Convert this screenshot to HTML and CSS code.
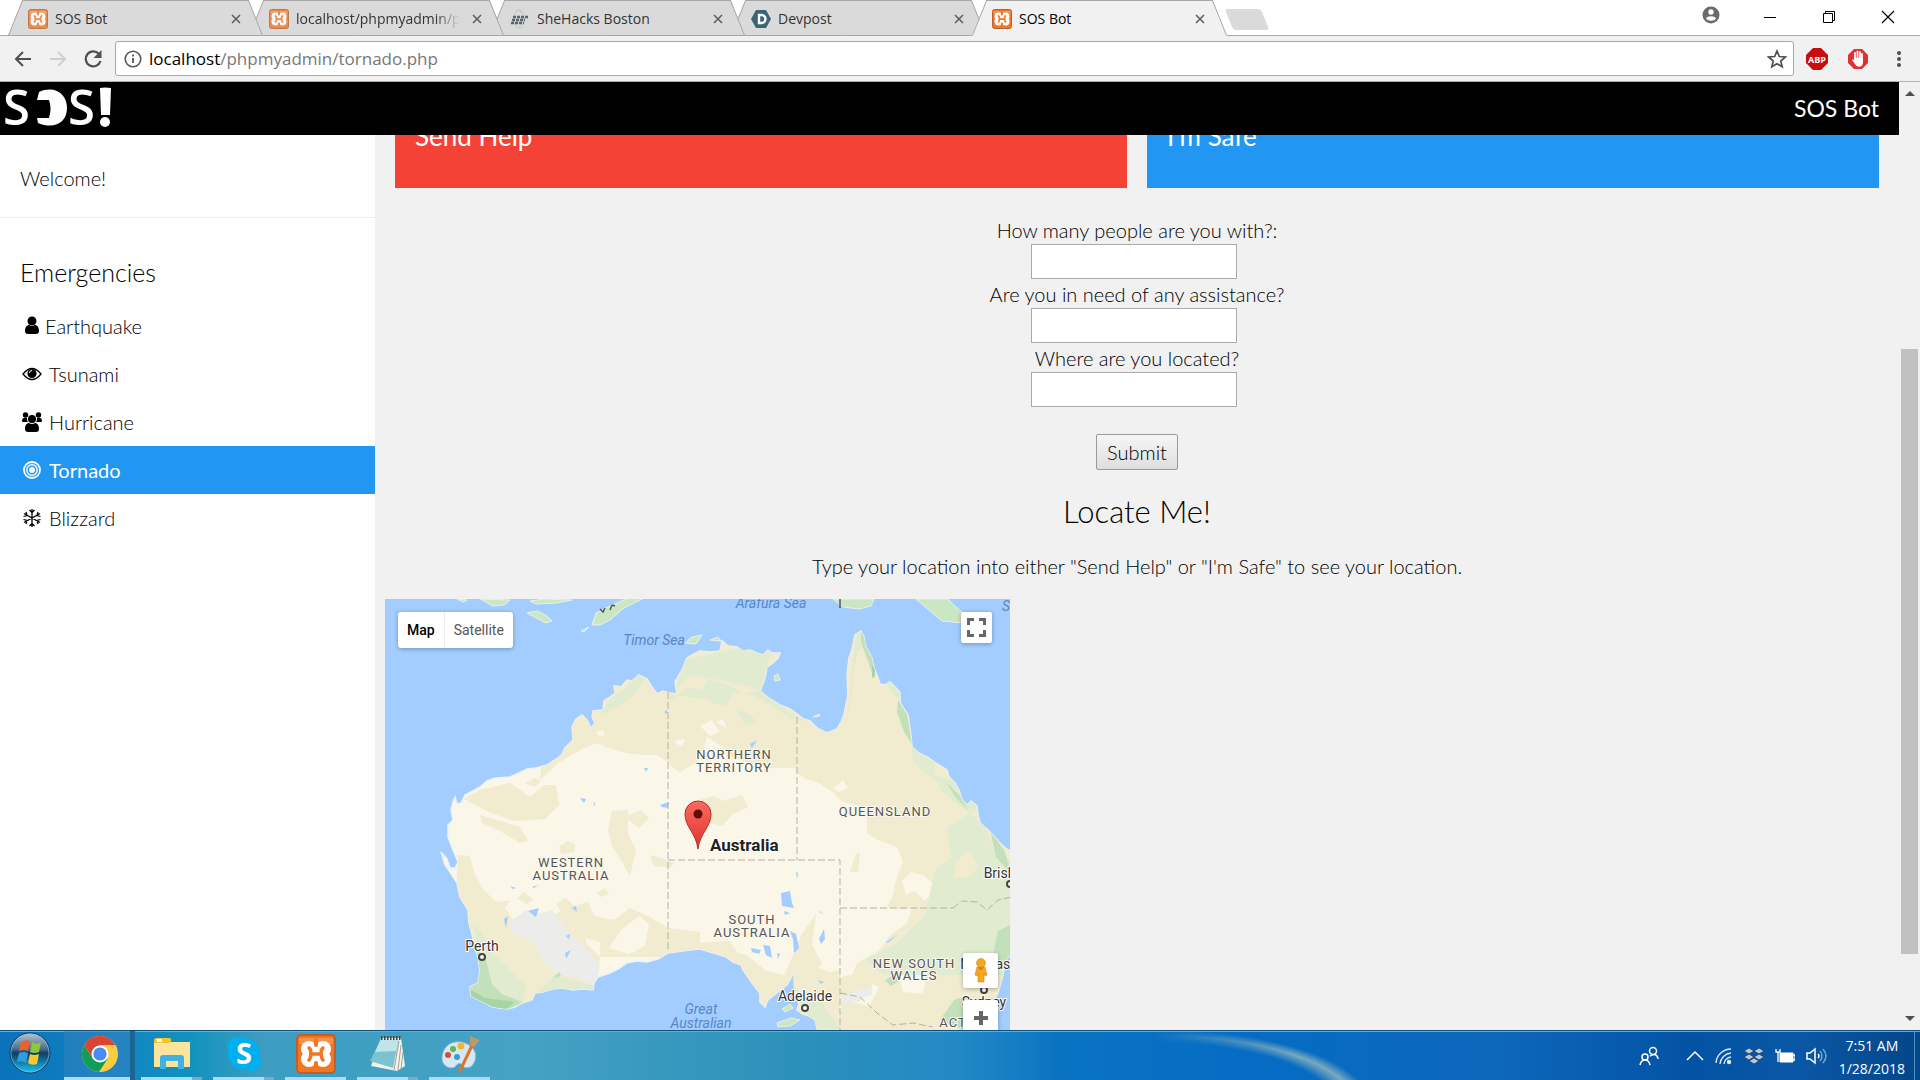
FILE: index.html
```html
<!DOCTYPE html>
<html lang="en">
<head>
    <meta charset="UTF-8">
    <meta name="viewport" content="width=device-width, initial-scale=1.0">
    <title>SOS Bot</title>
    <link rel="stylesheet" href="styles.css">
</head>
<body>
    <!-- shared icons -->
    <svg class="defs" aria-hidden="true">
        <symbol id="xampp" viewBox="0 0 40 40">
            <rect x="1" y="1" width="38" height="38" rx="4" fill="#f37623" stroke="#b9602c" stroke-width="2"/>
            <path d="M3 4h34v6H3z" fill="#f9a36a" opacity=".6"/>
            <g fill="#fff">
                <circle cx="13" cy="15" r="8"/><circle cx="27" cy="15" r="8"/>
                <circle cx="13" cy="25" r="8"/><circle cx="27" cy="25" r="8"/>
                <path d="M11 11h18v18H11z"/>
            </g>
            <path d="M13 14c3 2 2 10 0 12M27 14c-3 2-2 10 0 12M15 20h10" fill="none" stroke="#f37623" stroke-width="3.500" stroke-linecap="round"/>
            <path d="M20 6v5M20 29v5" stroke="#f37623" stroke-width="4" stroke-linecap="round"/>
        </symbol>
        <symbol id="close" viewBox="0 0 10 10">
            <path d="M1 1l8 8M9 1l-8 8" stroke="#5f5f5f" stroke-width="1.6"/>
        </symbol>
    </svg>

    <header class="browser">
        <div class="tabs">
            <div class="tab tab-1">
                <svg class="favicon faded"><use href="#xampp"/></svg>
                <span class="tab-title">SOS Bot</span>
                <button class="tab-close" aria-label="Close tab"><svg><use href="#close"/></svg></button>
            </div>
            <div class="tab tab-2">
                <svg class="favicon faded"><use href="#xampp"/></svg>
                <span class="tab-title fade">localhost/phpmyadmin/php</span>
                <button class="tab-close" aria-label="Close tab"><svg><use href="#close"/></svg></button>
            </div>
            <div class="tab tab-3">
                <svg class="favicon" viewBox="0 0 20 20">
                    <ellipse cx="9" cy="10" rx="5" ry="9" fill="none" stroke="#a8d5c0"/>
                    <path d="M5 4a5 9 0 0 1 7 0" fill="none" stroke="#edb49a"/>
                    <path d="M3 8h15M2 11h13M1 14h13" stroke="#5b646e" stroke-width="2.500" stroke-dasharray="3 1"/>
                </svg>
                <span class="tab-title">SheHacks Boston</span>
                <button class="tab-close" aria-label="Close tab"><svg><use href="#close"/></svg></button>
            </div>
            <div class="tab tab-4">
                <svg class="favicon" viewBox="0 0 20 20">
                    <path d="M5 1h10l5 9-5 9H5l-5-9z" fill="#3b6478"/>
                    <path d="M8 6h2.500a4 4 0 0 1 0 8H8z" fill="none" stroke="#fff" stroke-width="2.400"/>
                </svg>
                <span class="tab-title">Devpost</span>
                <button class="tab-close" aria-label="Close tab"><svg><use href="#close"/></svg></button>
            </div>
            <div class="tab active">
                <svg class="favicon"><use href="#xampp"/></svg>
                <span class="tab-title">SOS Bot</span>
                <button class="tab-close" aria-label="Close tab"><svg><use href="#close"/></svg></button>
            </div>
            <button class="new-tab" aria-label="New tab"></button>
            <div class="window-buttons">
                <button aria-label="Profile">
                    <svg width="18" height="18" viewBox="0 0 18 18"><circle cx="9" cy="9" r="8.500" fill="#6b6b6b"/><circle cx="9" cy="6" r="2.700" fill="#fff"/><path d="M4 12.500c1-3 9-3 10 0-2 3-8 3-10 0z" fill="#fff"/></svg>
                </button>
                <button aria-label="Minimize">
                    <svg width="14" height="14"><path d="M1 7.500h12" stroke="#000"/></svg>
                </button>
                <button aria-label="Restore">
                    <svg width="14" height="14" fill="none" stroke="#000"><path d="M1.500 3.500h9v9h-9zM3.500 3.500v-2h9v9h-2"/></svg>
                </button>
                <button aria-label="Close">
                    <svg width="14" height="14"><path d="M1 1l12 12M13 1L1 13" stroke="#000" stroke-width="1.200"/></svg>
                </button>
            </div>
        </div>
        <div class="toolbar">
            <div class="nav-buttons">
                <button aria-label="Back"><svg width="20" height="20" viewBox="0 0 20 20"><path d="M18 10H3M10 3l-7 7 7 7" fill="none" stroke="#505050" stroke-width="2"/></svg></button>
                <button aria-label="Forward"><svg width="20" height="20" viewBox="0 0 20 20"><path d="M2 10h15M10 3l7 7-7 7" fill="none" stroke="#cfcfcf" stroke-width="2"/></svg></button>
                <button aria-label="Reload"><svg width="20" height="20" viewBox="0 0 20 20"><path d="M16 5a7.500 7.500 0 1 0 1.500 7" fill="none" stroke="#505050" stroke-width="2.200"/><path d="M18.500 1v8h-8z" fill="#505050"/></svg></button>
            </div>
            <div class="address">
                <svg width="18" height="18" viewBox="0 0 18 18"><circle cx="9" cy="9" r="7.800" fill="none" stroke="#555" stroke-width="1.600"/><path d="M9 8v5M9 4.500v2" stroke="#555" stroke-width="1.800"/></svg>
                <span class="url">localhost<span>/phpmyadmin/tornado.php</span></span>
                <button aria-label="Bookmark"><svg width="20" height="20" viewBox="0 0 20 20"><path d="M10 2l2.300 5.500 6 .500-4.500 4 1.400 5.800L10 14.700l-5.200 3.100L6.200 12 1.700 8l6-.500z" fill="none" stroke="#505050" stroke-width="1.700"/></svg></button>
            </div>
            <div class="extensions">
                <button aria-label="Adblock Plus">
                    <svg width="22" height="22" viewBox="0 0 22 22"><path d="M7 0h8l7 7v8l-7 7H7l-7-7V7z" fill="#c70d0d"/><text x="11" y="15" text-anchor="middle" class="abp">ABP</text></svg>
                </button>
                <button aria-label="AdBlock">
                    <svg width="20" height="20" viewBox="0 0 20 20"><path d="M6 0h8l6 6v8l-6 6H6l-6-6V6z" fill="#e03030"/><path d="M7 11V4M9.500 10V2.500M12 10V3M14 12V5" stroke="#fff" stroke-width="1.800" stroke-linecap="round"/><path d="M6 9h9v4c0 6-6 6-8 2l-3-4c1-1 2 0 3 1z" fill="#fff"/></svg>
                </button>
                <button aria-label="Menu">
                    <svg width="6" height="18" fill="#505050"><circle cx="3" cy="3" r="2"/><circle cx="3" cy="9" r="2"/><circle cx="3" cy="15" r="2"/></svg>
                </button>
            </div>
        </div>
    </header>

    <div class="viewport">
        <div class="site">
            <div class="topbar">
                <svg class="logo" viewBox="0 0 108 42" role="img" aria-label="SOS!">
                    <text x="-2" y="38" class="logo-s">S</text>
                    <path d="M34 5C50-2 62 7 62 21S50 43 33 36l-1-5h12q3-10 0-18H32z" fill="#fff"/>
                    <text x="63" y="38" class="logo-s">S</text>
                    <path d="M95 1q5-1 11 0l-1 27h-9z" fill="#fff"/>
                    <circle cx="100" cy="35" r="5" fill="#fff"/>
                </svg>
                <span class="brand">SOS Bot</span>
            </div>

            <div class="columns">
                <nav class="sidebar">
                    <p class="welcome">Welcome!</p>
                    <h5>Emergencies</h5>
                    <a href="#earthquake" class="tight">
                        <svg viewBox="0 0 24 24"><circle cx="12" cy="7" r="4.500"/><path d="M5 17c0-4 2-6 4-6q3 2 6 0c2 0 4 2 4 6 0 2-1 3-3 3H8c-2 0-3-1-3-3z"/></svg>
                        Earthquake
                    </a>
                    <a href="#tsunami">
                        <svg viewBox="0 0 24 24"><path d="M3 12q9-11 18 0-9 11-18 0z" fill="none" stroke="currentColor" stroke-width="1.300"/><circle cx="12" cy="11.500" r="4.600"/><path d="M9.500 11q0-2.500 2.500-2.500" fill="none" stroke="#fff"/></svg>
                        Tsunami
                    </a>
                    <a href="#hurricane">
                        <svg viewBox="0 0 24 24"><circle cx="12" cy="9" r="4"/><circle cx="5.500" cy="5" r="2.700"/><circle cx="18.500" cy="5" r="2.700"/><path d="M5 19c0-4 2-6 4-6q3 2 6 0c2 0 4 2 4 6 0 2-1 3-3 3H8c-2 0-3-1-3-3zM2 11c0-3 2-4 5-3q0 3 1 4H4c-1 0-2 0-2-1zM22 11c0-3-2-4-5-3q0 3-1 4h4c1 0 2 0 2-1z"/></svg>
                        Hurricane
                    </a>
                    <a href="#tornado" class="current">
                        <svg viewBox="0 0 24 24"><g fill="none" stroke="currentColor"><circle cx="12" cy="12" r="8" stroke-width="1.800"/><circle cx="12" cy="12" r="5.200" stroke-width="1.400"/></g><circle cx="12" cy="12" r="3"/></svg>
                        Tornado
                    </a>
                    <a href="#blizzard">
                        <svg viewBox="0 0 24 24" fill="none" stroke="currentColor" stroke-width="1.300"><path d="M12 3v18M4 7.500l16 9M20 7.500l-16 9M9.500 4l2.500 2.500L14.500 4M9.500 20l2.500-2.500 2.500 2.500M3.500 10.500l3.500-1-1-3.500M20.500 10.500l-3.500-1 1-3.500M3.500 13.500l3.500 1-1 3.500M20.500 13.500l-3.500 1 1 3.500"/></svg>
                        Blizzard
                    </a>
                </nav>

                <main>
                    <div class="cards">
                        <div class="card red"><h4>Send Help</h4></div>
                        <div class="card blue"><h4>I'm Safe</h4></div>
                    </div>

                    <form>
                        <label for="people">How many people are you with?:</label>
                        <div class="field"><input type="text" id="people" name="people">&nbsp;</div>
                        <label for="assistance">Are you in need of any assistance?</label>
                        <div class="field"><input type="text" id="assistance" name="assistance">&nbsp;</div>
                        <label for="location">Where are you located?</label>
                        <div class="field"><input type="text" id="location" name="location">&nbsp;</div>
                        <button type="submit">Submit</button>
                    </form>

                    <h2>Locate Me!</h2>
                    <p class="hint">Type your location into either "Send Help" or "I'm Safe" to see your location.</p>

                    <div class="map">
                        <svg class="map-art" viewBox="385 599 625 431" role="img" aria-label="Map of Australia">
                            <defs>
                                <path id="land" d="M453 802L455 797 457 804 461 803 465 795 480 787 487 781 495 778 510 777 519 773 527 769 536 768 547 765 558 758 562 754 565 748 573 740 572 727 576 719 582 715 587 720 591 728 595 723 592 717 593 711 603 710 604 701 610 697 615 693 614 686 621 687 627 680 632 681 639 675 647 679 652 687 657 694 663 691 670 693 677 694 675 682 682 670 687 658 694 654 700 651 710 652 720 651 722 641 728 646 737 647 743 651 750 650 757 653 763 655 768 650 772 653 780 653 778 658 773 663 767 667 765 678 760 691 770 699 780 705 790 709 797 714 804 719 810 721 817 728 827 733 837 729 841 722 844 715 846 705 848 695 847 675 849 658 852 650 855 635 861 631 864 637 865 645 872 658 874 668 877 675 880 684 885 685 890 682 900 692 900 702 904 709 908 715 911 735 912 747 919 753 927 757 936 763 947 770 949 777 955 783 959 790 962 800 967 805 971 801 977 806 978 815 980 823 987 829 993 835 999 842 1005 848 1012 852V952L1006 960 1003 975 999 990 990 1010 985 1032H818L815 1020 809 1016 803 1014 797 1010 799 1003 795 997 794 980 795 970 791 978 787 985 778 992 768 1000 765 1007 760 1002 760 993 755 987 748 977 743 970 741 965 733 962 726 957 720 955 710 952 700 949 690 950 668 953 658 959 647 962 637 961 627 963 618 969 610 973 598 977 594 983 593 990 583 989 573 990 563 988 553 989 543 992 535 993 532 1000 522 1003 515 1007 507 1009 493 1007 483 1002 471 996 470 987 478 983 480 970 478 957 475 948 473 938 469 923 468 910 460 897 457 883 450 872 445 865 441 852 447 859 450 868 455 868 458 862 453 850 448 837 448 825 453 820 451 810z"/>
                                <clipPath id="coast"><use href="#land"/></clipPath>
                                <linearGradient id="pinFill" x1="0" y1="0" x2="0" y2="1"><stop offset="0" stop-color="#fb6a60"/><stop offset="1" stop-color="#e0332b"/></linearGradient>
                            </defs>
                            <path d="M385 599h625v431H385z" fill="#a3ccff"/>
                            <use href="#land" fill="#faf6e8" stroke="#edf3f2" stroke-width="1.500"/>
                            <g clip-path="url(#coast)">
                                <path fill="#f1ebd0" d="M540 780L558 763 580 750 597 743 608 748 627 753 642 755 657 755 668 762 673 768 680 772 700 760 707 737 720 745 732 757 747 762 770 768 795 768 797 773 806 779 817 782 833 792 840 800 847 803 867 807 867 833 878 840 897 847 903 862 896 880 893 895 887 907 907 910 903 925 890 935 880 950 857 963 852 975 840 977 842 1032H1020V610H560z"/>
                                <path fill="#f1ebd0" d="M458 855l12 1 4 16 8 16 14 14 20-2 8-8 14 12 14 2 14-8 8 8 14-4 6 14 20 4 16-12 18 8 20 12 32 4v25H600l-10 50H450zM480 790l30-7 20 14 14-12h12l3 20-14 14-30 2-24-8-28-14zM480 815l40 12 8 14-8 2-20-12-18-8zM612 811l16-1v24l8 16-6 26-8-14-10-16-4-16zM559 847l8-6 8 3v8l-14 2zM597 893l8-5 4 6-8 3zM650 855l14 4 10 4-4 5-16-2zM625 817l16-7 8 8-10 10zM700 800l14-4 10 5 18-6 6 12-16 8-10 11-18-4zM700 943l30-2 8 12 18 4 12 11 16 8 18-42 14-20-4 30 10 20-12 14 30-8-2 38 18 22h-110l-16-25-60-30zM850 872l6-18 4-2-2 20z"/>
                                <path fill="#f1ebd0" d="M525 783l10-5 6 3-6 6zM790 980l24-14 26 10v60h-45z"/>
                                <path fill="#faf6e8" d="M507 880l16-5 10 8-20 10zM505 908l8-12 14 8 12-8 16 6 6 10-16 5-18-5-14 8zM609 948l12-18 18-14 10 8-4 22-16 8zM586 938l14 4v15l-14-14zM700 726l12-6 8 12-10 4zM725 660l8 3-5 5zM716 722l7-3 4 9zM833 788l10-8 5 8-9 4zM911 872l12 3 14 12-12 14-11-10-8 4-4-14zM897 915l16-10-6 18-20 14zM905 934l18-8 9 20-9 48-20-2-4-16zM744 953l34 4 8 18-20-4zM845 1000l14 2 14-18 6 3-10 20zM675 740l10-1-3 7-6-2zM595 732l8-2 2 5-6 1z"/>
                                <path fill="#ececea" d="M510 922l16-12 12 4 14-4 16 22 18 16 14 18-4 20-20-8-20-4-14-14-4-12-14-12-12-2zM903 932l12-4 8 6-4 12-12 2zM840 998l16-7 16-4v8l-26 9z"/>
                                <path fill="#e0ebcf" d="M600 715l10-16 17-12 12-14 5 6-8 14-16 12zM670 700l18-12 14 2 6-10 24 6 10 8 20-4 30 24 20 8-22-4-34-22-36-6-10 10-40-6zM675 690l10-30 90-20-14 50-40-10-30-5zM845 735l3-25 4-40 5-45 25 55 26 30 6 60 70 55 10 25 35 20v105H885l-20-15 30-15 30-30 10-44 16-14-4-30 30-18-4-24-40-10 12-50-24-40-16-3-20-14-12-30-16 14zM472 924l10 8 8 18 16 16 20 20-4 20h-55V960l10-25zM535 994l20-18 40 10-4 10zM795 987l10 14 14-2 22 30h-30zM705 688l14-2 14 8-8 12-14-4zM735 710l14 4 8 8-12 2z"/>
                                <path fill="#f1ebd0" d="M860 720l18-10 14 8 8 18-12 8-14-4-12 10zM888 760l20-2 30 25 4 12-16 14-40-6zM955 862l14-12 10 16-10 12-15-1z"/>
                                <path fill="#c2e1bb" d="M861 631l8 14 6 22-1 12-5-15-8-22zM898 700l9 14 5 30-8-12-7-20zM946 782l14 14 8 14-12-12zM478 950l8 10 6 24 10 10 20 8-20 12-36-16zM1010 925l-12 6-5 24 4 16 14-16zM990 830l14 20 8 25-16-18zM885 980l14-8 2 8-10 6zM940 1020l14-20 10-4v34zM553 978l6-6 2 4z"/>
                                <path fill="#a8d4a5" d="M471 990l14 8 30 4-10 8-35-8zM872 666l3 2v8l-3 2z"/>
                            </g>
                            <!-- islands -->
                            <g fill="#cbe6c2" stroke="#e9f2e4" stroke-width="1">
                                <path d="M457 599l10 1-4 2zM480 599l30 1-6 5-12 1-6-4zM530 601l14-2 28 1-16 3-20 1zM527 613l10-2 10 5 5 5-6 2-10-5zM592 625l4-12 12-6 20-9h16l-20 10-14 12-10 5zM581 631l8-4-5 5zM685 643l7-6 10-2-6 9zM710 640l8-3 3 4zM833 599h41l-3 7-12 3-16-2zM916 599h32l8 8 12 10-4 6-22-2-12-10zM777 1023l14-5 9 2-10 6-12 1zM782 1009l8-5 3 4-8 4zM774 676l4-2 2 6-5 1zM813 717l6-3 1 2z"/>
                            </g>
                            <path d="M840 599v9M600 609l3 3 2-4M612 605l-2 5M612 605l3 1" fill="none" stroke="#555" stroke-width="1.500"/>
                            <!-- lakes -->
                            <g fill="#a3ccff">
                                <path d="M781 893l9-2 2 12 2 5-12-2zM784 911l6 2-5 2zM819 939l5-10 1 10-4 5zM790 931l6 3 3 14-5 5-1-14zM763 945l7 1 2 12-6-3zM751 948l10 2-2 4-7-2zM777 953l3 1-2 5zM660 805l9-3-1 6-6-1zM528 911l11-3-3 9-4-3zM504 919l4-3-2 12zM572 908l4-2 1 6zM566 936l4-2-1 5zM565 953l6-3-5 9zM644 768h4l-2 4zM664 712l3-2v4zM796 872l2 1-1 6zM750 744l7-4-5 8zM580 798l6 1-2 4zM593 802l2 1v4zM819 911l5 3-5-2zM886 942l12-8-10 9zM818 980l6 2-3 2zM510 886l6 2-3 1zM532 887l6-2-4 3z"/>
                            </g>
                            <g class="borders">
                                <path d="M668 692v260M797 717v143M668 860h172v170M840 908h113"/>
                                <path d="M953 908l9-7 15 1 10 8 11-10 14-3M840 993l20 4 17 16 16 12 20-2 20 4"/>
                            </g>
                            <!-- region and city names -->
                            <g class="sea">
                                <text x="654" y="645">Timor Sea</text>
                                <text x="771" y="608">Arafura Sea</text>
                                <text x="701" y="1014">Great</text>
                                <text x="701" y="1028">Australian</text>
                                <text x="1029" y="611">Solomon</text>
                            </g>
                            <g class="state">
                                <text x="734" y="759">NORTHERN</text><text x="734" y="772">TERRITORY</text>
                                <text x="885" y="816">QUEENSLAND</text>
                                <text x="571" y="867">WESTERN</text><text x="571" y="880">AUSTRALIA</text>
                                <text x="752" y="924">SOUTH</text><text x="752" y="937">AUSTRALIA</text>
                                <text x="914" y="968">NEW SOUTH</text><text x="914" y="980">WALES</text>
                                <text x="953" y="1027">ACT</text>
                            </g>
                            <g class="city">
                                <circle cx="482" cy="957" r="3"/><text x="482" y="951">Perth</text>
                                <circle cx="805" cy="1008" r="3"/><text x="805" y="1001">Adelaide</text>
                                <circle cx="1010" cy="884" r="3"/><text x="1011" y="878">Brisbane</text>
                                <circle cx="984" cy="990" r="3"/><text x="984" y="1007">Sydney</text>
                                <text x="993" y="969">Newcastle</text>
                            </g>
                            <text x="710" y="851" class="country">Australia</text>
                            <path d="M698 849c-2-16-13-22-13-35a13 13 0 0 1 26 0c0 13-11 19-13 35z" fill="url(#pinFill)" stroke="#b3302a"/>
                            <circle cx="698" cy="814" r="4.500" fill="#5c0f0b"/>
                        </svg>
                        <div class="map-type">
                            <button class="selected">Map</button>
                            <button>Satellite</button>
                        </div>
                        <button class="map-button fullscreen" aria-label="Toggle fullscreen">
                            <svg width="19" height="19" fill="none" stroke="#666" stroke-width="3"><path d="M1.500 7V1.500H7M12 1.500h5.500V7M17.500 12v5.500H12M7 17.500H1.500V12"/></svg>
                        </button>
                        <button class="map-button pegman" aria-label="Street View">
                            <svg width="16" height="26" viewBox="0 0 16 26" fill="#f5a81c" stroke="#d5871a" stroke-width=".6"><path d="M4 9h8l2 8-2 1-1-3v9H5v-9l-1 3-2-1z"/><circle cx="8" cy="5" r="4.500"/><path d="M5 9.500l3 2.500 3-2.500z" fill="#e0701a"/></svg>
                        </button>
                        <button class="map-button zoom-in" aria-label="Zoom in">
                            <svg width="14" height="14"><path d="M7 0v14M0 7h14" stroke="#666" stroke-width="4"/></svg>
                        </button>
                    </div>
                </main>
            </div>
        </div>
        <div class="scrollbar">
            <span class="arrow up"></span>
            <span class="thumb"></span>
            <span class="arrow down"></span>
        </div>
    </div>

    <footer class="taskbar">
        <button class="start" aria-label="Start">
            <svg width="42" height="42" viewBox="0 0 42 42">
                <defs><linearGradient id="orb" x1="0" y1="0" x2="0" y2="1"><stop offset="0" stop-color="#b9c6d2"/><stop offset=".4" stop-color="#4a6d8c"/><stop offset=".5" stop-color="#0e3c68"/><stop offset="1" stop-color="#19c7f4"/></linearGradient></defs>
                <circle cx="21" cy="21" r="20" fill="url(#orb)" stroke="#0b3b66"/>
                <circle cx="21" cy="21" r="19" fill="none" stroke="#8fc0df" stroke-width=".7"/>
                <path d="M12 10q5-3 9-1l-2 10q-4-2-9 0z" fill="#e9622b"/>
                <path d="M23 10q5 3 9 0l-2 10q-5 2-9 0z" fill="#8cc63f"/>
                <path d="M10 21q4-2 9 0l-2 10q-4-3-9-1z" fill="#2f9fe0"/>
                <path d="M21 22q4 2 9 0l-2 10q-5 2-9-1z" fill="#fbc82c"/>
            </svg>
        </button>
        <button class="task chrome" aria-label="Google Chrome">
            <svg width="38" height="38" viewBox="0 0 38 38">
                <circle cx="19" cy="19" r="18" fill="#fccd43"/>
                <path d="M19 10h15.600a18 18 0 0 0-31.200 0L11 23z" fill="#da4437"/>
                <path d="M3.400 10A18 18 0 0 0 18 37l9-14-8 4-8-4z" fill="#109d58"/>
                <circle cx="19" cy="19" r="8.500" fill="#fff"/><circle cx="19" cy="19" r="6.600" fill="#4a8af4"/>
            </svg>
        </button>
        <button class="task stacked" aria-label="File Explorer">
            <svg width="38" height="34" viewBox="0 0 38 34"><path d="M1 2h14l3 3h19v25H1z" fill="#fbe49b"/><path d="M1 3q0-2 3-2h12q3 0 2 3l-2 2H1z" fill="#f3c52e"/><path d="M4 2h5v3H4z" fill="#fff"/><path d="M7 32V21q0-3 3-3h18q3 0 3 3v11h-6v-8H13v8z" fill="#3fb1e5"/></svg>
        </button>
        <button class="task stacked" aria-label="Skype">
            <svg width="38" height="38" viewBox="0 0 38 38"><circle cx="19" cy="19" r="16" fill="#00aff0"/><circle cx="11" cy="11" r="9" fill="#00aff0"/><circle cx="27" cy="27" r="9" fill="#00aff0"/><text x="19" y="29" text-anchor="middle" class="skype">S</text></svg>
        </button>
        <button class="task" aria-label="XAMPP"><svg width="40" height="40"><use href="#xampp"/></svg></button>
        <button class="task stacked" aria-label="Notepad">
            <svg width="38" height="38" viewBox="0 0 38 38"><path d="M12 3h20l4 28-8 5-26-5z" fill="#f4f3ea"/><path d="M12 4h18L24 33 1 26z" fill="#7cc3d2"/><path d="M12 4h18l-3 12L6 17z" fill="#bfe5ea"/><path d="M30 6l-5 29M32 10l-3 25M34 17l-2 17" stroke="#8a8f80" stroke-width=".8"/><path d="M12 3h20" stroke="#444" stroke-width="4" stroke-dasharray="1.500 1.500"/></svg>
        </button>
        <button class="task" aria-label="Paint">
            <svg width="40" height="38" viewBox="0 0 40 38"><path d="M2 22C3 10 14 4 25 8c10 4 13 12 9 20-3 6-10 6-12 2-2-3-5-1-7 2-5 3-14-1-13-10z" fill="#d5e8f6" stroke="#8fb4d0"/><circle cx="8" cy="20" r="3" fill="#d84a3c"/><circle cx="13" cy="14" r="3" fill="#5fb84a"/><circle cx="21" cy="11" r="3.500" fill="#f2b632"/><circle cx="17" cy="22" r="3" fill="#3b9fc4"/><path d="M34 6L20 36" stroke="#d9762a" stroke-width="3" stroke-linecap="round"/><path d="M30 1l10 4-6 7-4-2z" fill="#b99a6c"/></svg>
        </button>
        <div class="tray">
            <svg width="20" height="20" fill="none" stroke="#fff" stroke-width="1.500"><circle cx="14" cy="5" r="3.500"/><circle cx="6" cy="11" r="3"/><path d="M1 19q1-5 5-5t5 5M11 10q7-4 8 3"/></svg>
            <svg width="18" height="12" fill="none" stroke="#fff" stroke-width="1.500"><path d="M1 10l8-8 8 8"/></svg>
            <svg width="18" height="18" fill="none" stroke="#dce8f4" stroke-width="1.400"><path d="M1 16A15 15 0 0 1 16 2M5 17A12 12 0 0 1 16 6M9 17a8 8 0 0 1 7-7"/><circle cx="14" cy="15" r="1.500" fill="#fff"/></svg>
            <svg width="20" height="18" fill="#b9c9d8" stroke="#1c3f66" stroke-width=".8"><path d="M5 1l5 3-5 3-5-3zM15 1l5 3-5 3-5-3zM5 7l5 3-5 3-5-3zM15 7l5 3-5 3-5-3zM10 11l5 3-5 3-5-3z"/></svg>
            <svg width="20" height="16" viewBox="0 0 20 16"><path d="M5 5h13v9H5z" fill="#fff" stroke="#fff"/><path d="M18 7h2v5h-2M1 1v3h4V1M3 4v10" fill="none" stroke="#fff" stroke-width="1.300"/></svg>
            <svg width="22" height="18" fill="none" stroke="#fff" stroke-width="1.500"><path d="M1 6h3l5-4v14l-5-4H1zM12 7q2 2 0 4"/><path d="M14 4q4 5 0 10M17 2q6 7 0 14" opacity=".45"/></svg>
            <div class="clock">7:51 AM<br>1/28/2018</div>
        </div>
    </footer>
</body>
</html>
```
FILE: styles.css
```css
* {
    box-sizing: border-box;
}
body {
    margin: 0;
    height: 100vh;
    display: flex;
    flex-direction: column;
    overflow: hidden;
    background: #f1f1f1;
    color: #000;
    font-family: "Open Sans", sans-serif;
}
button {
    padding: 0;
    border: 0;
    background: none;
    font: inherit;
    color: inherit;
    cursor: pointer;
}
svg {
    display: block;
    flex: none;
}
.defs {
    position: absolute;
    width: 0;
    height: 0;
}

/* browser window */
.browser {
    flex: none;
    background: #f1f1f1;
    border-bottom: 1px solid #b0b0b0;
}
.tabs {
    display: flex;
    height: 36px;
    padding-left: 15px;
    background: #fff;
    border-bottom: 1px solid #a8a8a8;
}
.tab {
    position: relative;
    isolation: isolate;
    display: flex;
    align-items: center;
    width: 241px;
    height: 36px;
    padding: 1px 15px 0 13px;
    font-size: 14px;
    color: #333;
}
.tab::before,
.tab::after {
    content: "";
    position: absolute;
    z-index: -1;
    top: 0;
    bottom: 0;
    background: #dadada;
    border-top: 1px solid #a8a8a8;
    border-bottom: 1px solid #a8a8a8;
}
.tab::before {
    left: 0;
    right: 50%;
    border-left: 1px solid #a8a8a8;
    transform: skewX(-22deg);
}
.tab::after {
    left: 40%;
    right: 0;
    border-right: 1px solid #a8a8a8;
    transform: skewX(22deg);
}
.tab-1 { z-index: 4; }
.tab-2 { z-index: 3; }
.tab-3 { z-index: 2; }
.tab-4 { z-index: 1; }
.tab.active {
    z-index: 5;
    color: #000;
}
.tab.active::before,
.tab.active::after {
    background: #f1f1f1;
    border-bottom-color: #f1f1f1;
}
.favicon {
    width: 20px;
    height: 20px;
}
.faded {
    opacity: .8;
}
.tab-title {
    flex: 1;
    min-width: 0;
    margin-left: 7px;
    overflow: hidden;
    white-space: nowrap;
}
.fade {
    -webkit-mask-image: linear-gradient(to right, #000 85%, transparent);
    mask-image: linear-gradient(to right, #000 85%, transparent);
}
.tab-close {
    margin-left: 12px;
}
.tab-close svg {
    width: 10px;
    height: 10px;
}
.new-tab {
    width: 36px;
    height: 21px;
    margin: 9px 0 0 9px;
    background: #dadada;
    border-radius: 3px;
    transform: skewX(22deg);
}
.window-buttons {
    display: flex;
    margin-left: auto;
    padding-right: 3px;
}
.window-buttons button {
    display: flex;
    justify-content: center;
    align-items: center;
    width: 59px;
    height: 34px;
}
.window-buttons button:first-child {
    padding-bottom: 4px;
}
.toolbar {
    display: flex;
    align-items: center;
    gap: 12px;
    height: 45px;
    padding: 0 18px 0 13px;
}
.nav-buttons {
    display: flex;
    gap: 15px;
}
.address {
    flex: 1;
    display: flex;
    align-items: center;
    gap: 7px;
    height: 35px;
    padding: 0 6px 0 8px;
    background: #fff;
    border: 1px solid #a8a8a8;
    border-radius: 3px;
}
.url {
    flex: 1;
    font-size: 17px;
}
.url span {
    color: #777;
}
.extensions {
    display: flex;
    align-items: center;
    gap: 20px;
}
.extensions button:last-child {
    margin-left: 8px;
}
.abp {
    font: bold 9px "Open Sans", sans-serif;
    fill: #fff;
}

/* page */
.viewport {
    flex: 1;
    display: flex;
    min-height: 0;
    font-family: Lato, sans-serif;
    font-size: 20px;
    font-weight: 300;
    line-height: 28px;
}
.site {
    flex: 1;
    display: flex;
    flex-direction: column;
    min-width: 0;
}
.topbar {
    flex: none;
    display: flex;
    justify-content: space-between;
    align-items: center;
    height: 53px;
    padding: 0 20px 2px 5px;
    background: #000;
    color: #fff;
    font-size: 24px;
}
.logo {
    width: 108px;
    height: 42px;
    overflow: visible;
}
.logo-s {
    font: 600 49px "Open Sans", sans-serif;
    fill: #fff;
}
.brand {
    font-weight: 400;
    font-size: 23px;
}
.columns {
    flex: 1;
    display: flex;
    min-height: 0;
}
.sidebar {
    flex: none;
    width: 375px;
    background: #fff;
}
.welcome {
    margin: 0;
    padding: 29px 20px 25px;
    border-bottom: 1px solid #eee;
}
.sidebar h5 {
    margin: 36px 20px 12px;
    font-size: 25px;
    font-weight: 300;
    line-height: 36px;
}
.sidebar a {
    display: flex;
    align-items: center;
    gap: 5px;
    height: 48px;
    padding: 0 20px;
    color: inherit;
    text-decoration: none;
}
.sidebar a.tight {
    gap: 1px;
}
.sidebar svg {
    width: 24px;
    height: 24px;
    fill: currentColor;
}
.sidebar svg[fill="none"] {
    fill: none;
}
.sidebar .current {
    background: #2196f3;
    color: #fff;
    font-weight: 400;
}
main {
    flex: 1;
    min-width: 0;
    overflow: hidden;
    text-align: center;
}
.cards {
    display: flex;
    gap: 20px;
    margin-top: -17px;
    padding: 0 20px;
}
.card {
    flex: 1;
    padding: 0 20px 34px;
    color: #fff;
    text-align: left;
}
.card h4 {
    margin: 0;
    font-size: 26px;
    font-weight: 400;
    line-height: 36px;
}
.red { background: #f44336; }
.blue { background: #2196f3; }
form {
    margin-top: 28px;
}
label {
    display: block;
}
.field {
    display: flex;
    justify-content: center;
    height: 36px;
}
input {
    width: 206px;
    height: 35px;
    padding: 2px;
    border: 1px solid #a9a9a9;
    font: inherit;
}
form button {
    height: 36px;
    margin-top: 26px;
    padding: 0 10px;
    border: 1px solid #999;
    border-radius: 2px;
    background: linear-gradient(#f6f6f6, #dedede);
}
h2 {
    margin: 19px 0;
    font-size: 31px;
    font-weight: 300;
    line-height: 44px;
}
.hint {
    margin: 0 0 19px;
}

/* map */
.map {
    position: relative;
    width: 625px;
    height: 500px;
    margin-left: 10px;
    overflow: hidden;
    background: #a3ccff;
    font-family: Roboto, sans-serif;
    font-weight: 400;
}
.map-art {
    width: 100%;
}
.map-art text {
    paint-order: stroke;
    text-anchor: middle;
}
.sea text {
    fill: #5787cb;
    font-size: 14px;
    font-style: italic;
}
.state text {
    fill: #555;
    stroke: #fbf8ee;
    stroke-width: 2px;
    font-size: 13px;
    letter-spacing: 1px;
}
.city text {
    fill: #333;
    stroke: #fff;
    stroke-width: 2px;
    font-size: 14px;
}
.city circle {
    fill: #fff;
    stroke: #444;
    stroke-width: 2px;
}
.map-art .country {
    fill: #222;
    stroke: #fff;
    stroke-width: 2px;
    font-size: 17px;
    font-weight: 700;
    text-anchor: start;
}
.borders {
    fill: none;
    stroke: #b5b2a5;
    stroke-dasharray: 7 3;
}
.map-type {
    position: absolute;
    top: 13px;
    left: 13px;
    display: flex;
    background: #fff;
    border-radius: 3px;
    box-shadow: 0 1px 4px rgba(0,0,0,0.3);
}
.map-type button {
    height: 36px;
    padding: 0 9px;
    font-size: 14px;
    color: #565656;
}
.map-type .selected {
    border-right: 1px solid #eee;
    font-weight: 500;
    color: #000;
}
.map-button {
    position: absolute;
    display: flex;
    justify-content: center;
    align-items: center;
    width: 35px;
    height: 35px;
    background: #fff;
    border-radius: 2px;
    box-shadow: 0 1px 4px rgba(0,0,0,0.3);
}
.fullscreen {
    top: 13px;
    right: 18px;
    width: 31px;
    height: 31px;
}
.pegman {
    top: 354px;
    right: 12px;
}
.zoom-in {
    top: 401px;
    right: 12px;
}

/* scrollbar */
.scrollbar {
    display: flex;
    flex-direction: column;
    align-items: center;
    width: 21px;
    padding: 9px 0;
    background: #f1f1f1;
}
.thumb {
    flex: 605;
    width: 17px;
    background: #c1c1c1;
}
.arrow {
    border: 5px solid transparent;
}
.up {
    flex: 0 0 5px;
    border-top: 0;
    border-bottom-color: #505050;
    margin-bottom: 253px;
}
.down {
    flex: 0 0 5px;
    border-bottom: 0;
    border-top-color: #505050;
    margin-top: 62px;
}

/* taskbar */
.taskbar {
    position: relative;
    flex: none;
    display: flex;
    height: 50px;
    border-top: 1px solid #0e4f7c;
    box-shadow: inset 0 1px #5fb0d8;
    background: linear-gradient(to right, #0a72ba 0, #1286c2 130px, #1192bd 190px, #3c9dc0 260px, #45a2c4 520px, #2b90b9 800px, #2289c6 960px, #0973c2 1060px, #056cc4 1250px, #0d67bb 1500px, #0353a4 1690px, #0a57a5 1800px, #034689 1920px);
}
/* light streak from the wallpaper */
.taskbar::before {
    content: "";
    position: absolute;
    top: 1px;
    bottom: 0;
    left: 60%;
    width: 240px;
    background: radial-gradient(ellipse 210px 76px at 10px 74px, transparent 82%, rgba(170,195,190,0.7) 92%, transparent 100%);
    -webkit-mask-image: linear-gradient(to right, transparent, #000 60%);
    mask-image: linear-gradient(to right, transparent, #000 60%);
}
.start {
    width: 64px;
    padding: 0 0 5px 9px;
}
.task {
    display: flex;
    justify-content: center;
    align-items: center;
    width: 61px;
    margin-right: 11px;
    padding-bottom: 3px;
    background: linear-gradient(#a9dcfb, #a9dcfb) bottom / 100% 3px no-repeat;
}
.task.stacked {
    background-image: linear-gradient(to right, #a9dcfb 83%, #79a9cb 83%);
}
.task.chrome {
    width: 71px;
    margin-right: 6px;
    background-color: rgba(60,130,190,0.45);
    box-shadow: inset -5px 0 #1c6593;
}
.skype {
    font: bold 29px "Open Sans", sans-serif;
    fill: #fff;
}
.tray {
    display: flex;
    align-items: center;
    gap: 11px;
    margin-left: auto;
    margin-right: 5px;
    padding-right: 9px;
    border-right: 1px solid #4f8fc2;
    color: #fff;
}
.tray svg:first-child {
    margin-right: 16px;
}
.clock {
    padding-top: 2px;
    font-size: 14px;
    line-height: 23px;
    text-align: center;
}
```
